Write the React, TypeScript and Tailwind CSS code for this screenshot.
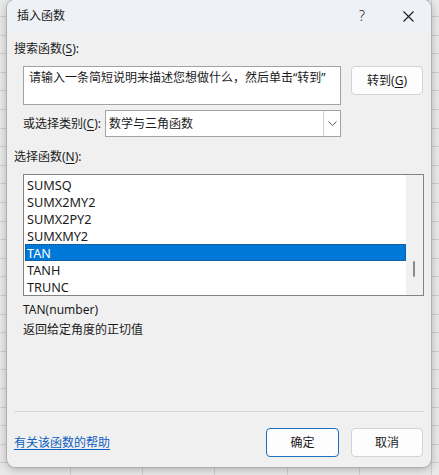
export default function App() {
  const items = ["SUMSQ", "SUMX2MY2", "SUMX2PY2", "SUMXMY2", "TAN", "TANH", "TRUNC"];
  return (
    <div className="w-[439px] h-[475px] overflow-hidden bg-[#e9e9e9] bg-[image:repeating-linear-gradient(to_bottom,transparent_0px,transparent_16px,#cfcfcf_16px,#cfcfcf_17px,transparent_17px,transparent_18.6px),repeating-linear-gradient(to_right,transparent_0px,transparent_70px,#cfcfcf_70px,#cfcfcf_71px,transparent_71px,transparent_72.2px)] pl-[7px] font-['Noto_Sans','Noto_Sans_CJK_SC',sans-serif] text-[12px] text-[#1b1b1b]">
      <div className="w-[424px] h-[467px] flex flex-col rounded-lg overflow-hidden bg-[#f0f0f0] ring-1 ring-[#b0b0b0] shadow-[0_2px_10px_rgba(0,0,0,0.28)]">
        {/* Title bar */}
        <div className="h-[32px] shrink-0 flex items-center bg-[#eef1f6]">
          <span className="pl-[10px] flex-1 leading-[16px]">插入函数</span>
          <div className="w-[46px] h-full flex items-center justify-center text-[14px] leading-none font-light">?</div>
          <div className="w-[46px] h-full flex items-center justify-center">
            <svg width="11" height="11" viewBox="0 0 11 11">
              <path d="M0.5 0.5 L10.5 10.5 M10.5 0.5 L0.5 10.5" stroke="#1b1b1b" strokeWidth="1.1" fill="none" />
            </svg>
          </div>
        </div>

        {/* Body */}
        <div className="flex-1 flex flex-col px-[7px] pb-[10px]">
          <div className="mt-[9px] leading-[16px]">
            搜索函数(<span className="underline underline-offset-2">S</span>):
          </div>

          <div className="mt-[9px] flex items-start">
            <div className="ml-[9px] w-[318px] h-[39px] bg-white border border-[#a3a3a3] pl-[5px] pt-[3px] leading-[16px] whitespace-nowrap">
              请输入一条简短说明来描述您想做什么，然后单击“转到”
            </div>
            <div className="ml-[10px] w-[72px] h-[29px] flex items-center justify-center bg-[#fdfdfd] border border-[#d3d3d3] rounded-[4px] leading-[16px]">
              转到(<span className="underline underline-offset-2">G</span>)
            </div>
          </div>

          <div className="mt-[5px] flex items-center">
            <div className="ml-[9px] w-[82px] leading-[16px]">
              或选择类别(<span className="underline underline-offset-2">C</span>):
            </div>
            <div className="w-[236px] h-[27px] flex bg-white border border-[#a3a3a3]">
              <div className="flex-1 flex items-center pl-[3px] leading-[16px]">数学与三角函数</div>
              <div className="w-[17px] flex items-center justify-center border-l border-[#d0d0d0] bg-white">
                <svg width="9" height="5" viewBox="0 0 9 5">
                  <path d="M0.5 0.5 L4.5 4.5 L8.5 0.5" stroke="#5a5a5a" strokeWidth="1" fill="none" />
                </svg>
              </div>
            </div>
          </div>

          <div className="mt-[12px] leading-[16px]">
            选择函数(<span className="underline underline-offset-2">N</span>):
          </div>

          <div className="mt-[9px] ml-[9px] w-[401px] h-[122px] flex border border-[#838383] bg-white">
            <div className="w-[382px] pl-[1px] pt-[1px] flex flex-col text-[12.7px]">
              {items.map((it) =>
                it === "TAN" ? (
                  <div
                    key={it}
                    className="h-[17px] flex items-center pl-[1px] bg-[#0078d7] text-white border border-dotted border-[#24466e] leading-[16px]"
                  >
                    {it}
                  </div>
                ) : (
                  <div key={it} className="h-[17px] flex items-center pl-[2px] leading-[16px]">
                    {it}
                  </div>
                )
              )}
            </div>
            <div className="flex-1 bg-[#f0f0f0] flex flex-col">
              <div className="mt-[86px] ml-[7px] w-[2px] h-[16px] bg-[#8a8a8a] rounded-[1px]" />
            </div>
          </div>

          <div className="mt-[6px] ml-[9px] leading-[16px]">TAN(number)</div>
          <div className="mt-[4px] ml-[9px] leading-[16px]">返回给定角度的正切值</div>

          <div className="flex-1" />
          <div className="h-px bg-[#d9d9d9]" />

          <div className="pt-[16px] flex items-center">
            <span className="text-[#0d5fc2] underline underline-offset-2 leading-[16px]">有关该函数的帮助</span>
            <div className="ml-auto mr-[1px] flex gap-[12px]">
              <div className="w-[73px] h-[29px] flex items-center justify-center bg-[#fdfdfd] border border-[#1e6fc1] rounded-[4px] leading-[16px]">
                确定
              </div>
              <div className="w-[72px] h-[29px] flex items-center justify-center bg-[#fdfdfd] border border-[#d3d3d3] rounded-[4px] leading-[16px]">
                取消
              </div>
            </div>
          </div>
        </div>
      </div>
    </div>
  );
}
